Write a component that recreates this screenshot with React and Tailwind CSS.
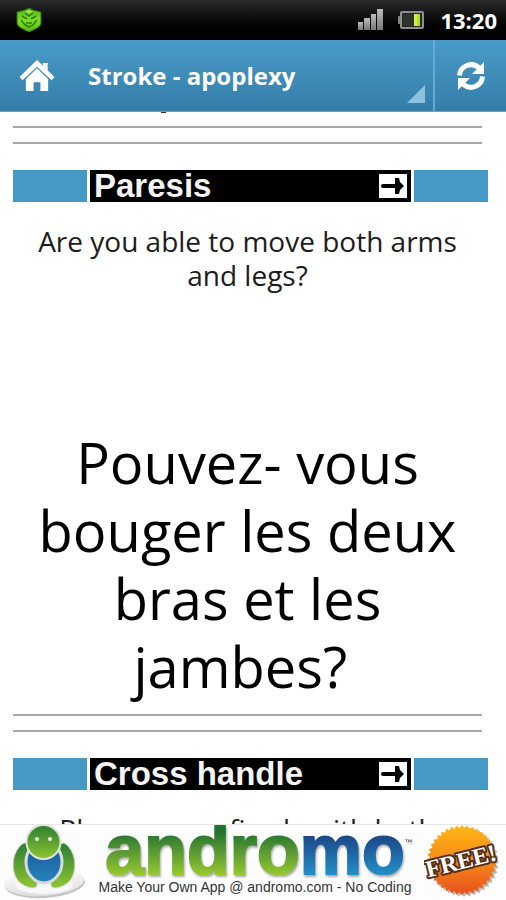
import React from 'react';

const HomeIcon = () => (
  <svg viewBox="0 0 36 33" className="w-9 h-8" aria-hidden="true">
    <path d="M24 3h5v8l-5-5z" fill="#fff" />
    <path d="M18 0 0 17.500 3 21 18 7l15 14 3-3.500z" fill="#fff" />
    <path d="M18 8.500 6.500 19.500V32H14.500V23h7v9h8V19.500z" fill="#fff" />
  </svg>
);

const RefreshIcon = () => (
  <svg viewBox="0 0 30 30" className="w-[30px] h-[30px]" aria-hidden="true">
    <g fill="none" stroke="#fff" strokeWidth="5">
      <path d="M3.500 14.500A11.500 11.500 0 0 1 23 7" />
      <path d="M26.500 15.500A11.500 11.500 0 0 1 7 23" />
    </g>
    <path d="M28 1v12H16z" fill="#fff" />
    <path d="M2 29V17h12z" fill="#fff" />
  </svg>
);

const ShieldIcon = () => (
  <svg viewBox="0 0 26 26" className="w-[26px] h-[26px]" aria-hidden="true">
    <defs>
      <linearGradient id="shield" x1="0" y1="0" x2="0" y2="1">
        <stop offset="0" stopColor="#4fae1c" />
        <stop offset="0.5" stopColor="#7be01f" />
        <stop offset="1" stopColor="#58b81a" />
      </linearGradient>
    </defs>
    <path d="M13 1l4 2 8 2v11c0 4-6 6-12 9C7 22 1 20 1 16V5l8-2z" fill="url(#shield)" stroke="#2c6b12" />
    <path d="M6 9l5 3M20 9l-5 3M5 13l4 5 4 2 4-2 4-5M10 16h6M9 6l4 3 4-3" fill="none" stroke="#2f7d14" strokeWidth="1.500" />
    <path d="M9 5l4-2 4 2-4 1z" fill="#a4ec46" />
  </svg>
);

const SignalIcon = () => (
  <svg viewBox="0 0 26 22" className="w-[26px] h-[22px]" aria-hidden="true">
    <defs>
      <linearGradient id="signal" x1="0" y1="0" x2="0" y2="1">
        <stop offset="0" stopColor="#bdbdbd" />
        <stop offset="1" stopColor="#777" />
      </linearGradient>
    </defs>
    <g fill="url(#signal)">
      <rect x="0" y="13" width="5" height="8" />
      <rect x="6" y="9" width="6" height="12" />
      <rect x="13" y="5" width="5" height="16" />
      <rect x="19" y="0" width="6" height="21" />
    </g>
  </svg>
);

const BatteryIcon = () => (
  <svg viewBox="0 0 26 18" className="w-[26px] h-[18px]" aria-hidden="true">
    <rect x="0" y="5" width="4" height="8" rx="1" fill="#858585" />
    <rect x="3" y="1" width="22" height="16" rx="1" fill="#272727" stroke="#8f8f8f" strokeWidth="2" />
    <rect x="5" y="3" width="12" height="12" fill="#30352c" />
    <rect x="16" y="3" width="6" height="12" fill="#b4dc1e" />
    <rect x="16" y="3" width="3" height="12" fill="#d2ee55" />
  </svg>
);

const ArrowIcon = () => (
  <svg viewBox="0 0 28 24" className="w-7 h-6" aria-hidden="true">
    <rect width="28" height="24" fill="#fff" />
    <path d="M4 12h16" stroke="#000" strokeWidth="4" strokeLinecap="round" />
    <path d="M16 4h4l1 4 4 4-4 4-1 4h-4z" fill="#000" />
  </svg>
);

const Mascot = () => (
  <svg viewBox="0 0 86 76" className="w-[86px] h-[76px] shrink-0" aria-hidden="true">
    <defs>
      <linearGradient id="mascotGreen" x1="0" y1="0" x2="0" y2="1">
        <stop offset="0" stopColor="#2a7d33" />
        <stop offset="1" stopColor="#8fc52f" />
      </linearGradient>
      <linearGradient id="mascotBlue" x1="0" y1="0" x2="0" y2="1">
        <stop offset="0" stopColor="#1d4f93" />
        <stop offset="1" stopColor="#2487bd" />
      </linearGradient>
      <linearGradient id="disc" x1="0" y1="0" x2="0" y2="1">
        <stop offset="0" stopColor="#fff" />
        <stop offset="1" stopColor="#dedede" />
      </linearGradient>
    </defs>
    <ellipse cx="45" cy="59" rx="40" ry="14" fill="#c4c4c4" transform="rotate(-4 45 59)" />
    <ellipse cx="44" cy="57" rx="40" ry="14" fill="url(#disc)" transform="rotate(-4 44 57)" />
    <ellipse cx="44" cy="60" rx="29" ry="9" fill="#f8f8f8" />
    <path d="M24 18C10 26 10 52 22 59c6 4 12 5 15 2V20zM64 18c14 8 14 34 2 41-6 4-12 5-15 2V20z" fill="url(#mascotGreen)" stroke="#c8d3c0" />
    <ellipse cx="44" cy="37" rx="18" ry="21" fill="url(#mascotBlue)" stroke="#d5dde3" strokeWidth="3" />
    <circle cx="43.500" cy="17" r="17" fill="url(#mascotGreen)" stroke="#dbe6d5" strokeWidth="2" />
    <circle cx="37" cy="14" r="2" fill="#e8f5dc" />
    <circle cx="50" cy="14" r="2" fill="#e8f5dc" />
  </svg>
);

// Starburst outline, alternating between two radii
const burst = Array.from({ length: 80 }, (_, i) => {
  const r = i % 2 ? 32 : 35;
  const a = (i * Math.PI) / 40;
  return `${38 + r * Math.cos(a)},${35 + r * Math.sin(a)}`;
}).join(' ');

const FreeBadge = () => (
  <svg viewBox="0 0 76 76" className="w-[76px] h-[76px] shrink-0" role="img" aria-label="Free">
    <defs>
      <linearGradient id="badge" x1="0" y1="0" x2="0" y2="1">
        <stop offset="0" stopColor="#fdb813" />
        <stop offset="0.5" stopColor="#f68b1a" />
        <stop offset="1" stopColor="#e8501c" />
      </linearGradient>
    </defs>
    <polygon points={burst} fill="#bdb5ac" transform="translate(2 2)" />
    <polygon points={burst} fill="url(#badge)" />
    <text
      x="37"
      y="44"
      textAnchor="middle"
      transform="rotate(-14 37 36)"
      fontFamily="Liberation Serif, serif"
      fontWeight="700"
      fontSize="24"
      fill="#fff"
      stroke="#54301c"
      strokeWidth="4"
      strokeLinejoin="round"
      paintOrder="stroke"
    >
      FREE!
    </text>
  </svg>
);

const Divider = () => (
  <div className="space-y-3.5 pr-1.5">
    <hr className="border-t-2 border-[#aaa6a8]" />
    <hr className="border-t-2 border-[#aaa6a8]" />
  </div>
);

const SectionBar = ({ title }) => (
  <h2 className="mt-[26px] flex h-8 gap-[3px]">
    <span className="w-[74px] bg-[#4799c5]" />
    <button className="flex flex-1 items-center justify-between bg-black pl-1 pr-1 font-['Liberation_Sans',sans-serif] text-[33px] leading-8 font-bold text-[#f4f4f4]">
      {title}
      <ArrowIcon />
    </button>
    <span className="w-[74px] bg-[#4799c5]" />
  </h2>
);

const Question = ({ children }) => (
  <p className="mt-[22px] pr-1.5 text-center text-[28px] leading-[34px] text-[#1c1c1c]">{children}</p>
);

const App = () => {
  return (
    <div className="flex h-screen flex-col bg-white font-['Open_Sans','Noto_Sans',sans-serif]">
      {/* Status bar */}
      <div className="flex h-10 shrink-0 items-center bg-linear-to-b from-[#2b2b2b] to-black pl-4 pr-[9px]">
        <ShieldIcon />
        <div className="ml-auto flex items-center">
          <SignalIcon />
          <span className="ml-3.5">
            <BatteryIcon />
          </span>
          <span className="ml-4 text-[22px] leading-10 font-bold text-white">13:20</span>
        </div>
      </div>

      {/* Action bar */}
      <header className="flex h-[72px] shrink-0 border-b border-[#6aa3c2] bg-linear-to-b from-[#4a9bc8] to-[#347da9] text-white">
        <button aria-label="Home" className="flex w-[74px] items-center justify-center">
          <HomeIcon />
        </button>
        <button className="relative flex flex-1 items-center pl-3.5 text-left">
          <h1 className="text-2xl font-bold">Stroke - apoplexy</h1>
          <svg viewBox="0 0 18 18" className="absolute right-2 bottom-2 w-[18px]" aria-hidden="true">
            <path d="M18 0v18H0z" fill="#8fc0dd" />
          </svg>
        </button>
        <button aria-label="Refresh" className="flex w-[73px] items-center justify-center border-l-2 border-[#67a9d0]">
          <RefreshIcon />
        </button>
      </header>

      <main className="min-h-0 flex-1 overflow-hidden pl-[13px] pr-[18px]">
        <div className="mb-3.5 ml-[148px] h-px w-[5px] bg-[#333]" />
        <div className="-mt-px">
          <Divider />
        </div>
        <SectionBar title="Paresis" />
        <Question>Are you able to move both arms and legs?</Question>
        <p className="mt-[136px] mb-3.5 pr-1.5 text-center text-[56px] leading-[68px] text-black" lang="fr">
          Pouvez- vous bouger les deux bras et les jambes?&nbsp;
        </p>
        <Divider />
        <SectionBar title="Cross handle" />
        <Question>Please press firmly with both</Question>
      </main>

      {/* Ad banner */}
      <a href="#andromo" className="flex h-[76px] shrink-0 items-start justify-between border-t border-[#e6e6e6] bg-[#fdfdfd] pr-1.5">
        <Mascot />
        <div className="flex flex-col items-center whitespace-nowrap">
          <div className="flex pl-2 font-['Liberation_Sans',sans-serif] text-[70px] leading-[50px] font-bold drop-shadow-[1px_2px_1px_#0005]">
            <span className="bg-linear-to-b from-[#20742f] from-15% to-[#96c92e] bg-clip-text text-transparent [-webkit-text-stroke:2px_transparent]">andro</span>
            <span className="bg-linear-to-b from-[#1b4587] from-20% to-[#2390c8] bg-clip-text text-transparent [-webkit-text-stroke:2px_transparent]">mo</span>
            <span className="pt-3 text-[8px] leading-3 text-[#555]">™</span>
          </div>
          <span className="mt-1 font-['Liberation_Sans',sans-serif] text-sm leading-4 text-[#333]">
            Make Your Own App @ andromo.com - No Coding
          </span>
        </div>
        <FreeBadge />
      </a>
    </div>
  );
};

export default App;
